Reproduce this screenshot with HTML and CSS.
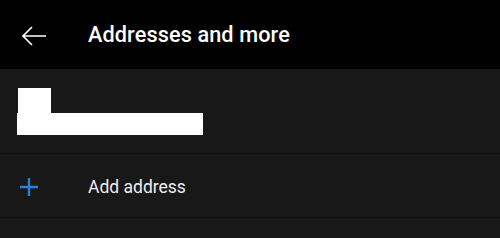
FILE: index.html
```html
<!DOCTYPE html>
<html lang="en">
<head>
    <meta charset="UTF-8">
    <meta name="viewport" content="width=device-width, initial-scale=1.0">
    <title>Addresses and more</title>
    <link rel="stylesheet" href="styles.css">
</head>
<body>

<div class="top-bar">
    <div class="back-icon">
        <svg width="26" height="22" viewBox="0 0 26 22">
            <path d="M25 11 H2 M11 2 L2 11 L11 20" fill="none" stroke="#ffffff" stroke-width="1.6"/>
        </svg>
    </div>
    <h1 class="top-bar-title">Addresses and more</h1>
</div>

<div class="profile-section">
    <div class="name-box"></div>
    <div class="email-box"></div>
</div>

<div class="add-row">
    <div class="add-icon">
        <svg width="18" height="18" viewBox="0 0 18 18">
            <path d="M9 0 V18 M0 9 H18" stroke="#2b7fd6" stroke-width="2.4"/>
        </svg>
    </div>
    <span class="add-label">Add address</span>
</div>

</body>
</html>
```

FILE: styles.css
```css
body {
    font-family: 'Roboto', 'Liberation Sans', sans-serif;
    background: #181818;
    color: white;
    margin: 0;
}

.top-bar {
    display: flex;
    align-items: center;
    height: 69px;
    background: #000000;
}

.back-icon {
    width: 88px;
    display: flex;
    padding-left: 21px;
    box-sizing: border-box;
    margin-top: 2px;
}

.top-bar-title {
    margin: 0;
    font-size: 21.7px;
    font-weight: 500;
    letter-spacing: 0.1px;
}

.profile-section {
    padding: 19px 0 18px 17px;
    border-bottom: 1px solid #111111;
}

.name-box {
    width: 33px;
    height: 25px;
    margin-left: 1px;
    background: #ffffff;
}

.email-box {
    width: 186px;
    height: 22px;
    background: #ffffff;
}

.add-row {
    display: flex;
    align-items: center;
    height: 63px;
    border-bottom: 1px solid #111111;
}

.add-icon {
    width: 88px;
    padding-left: 20px;
    box-sizing: border-box;
    display: flex;
    margin-top: 2px;
}

.add-label {
    font-size: 17.5px;
    color: #eeeeee;
    margin-top: 2px;
}
```
